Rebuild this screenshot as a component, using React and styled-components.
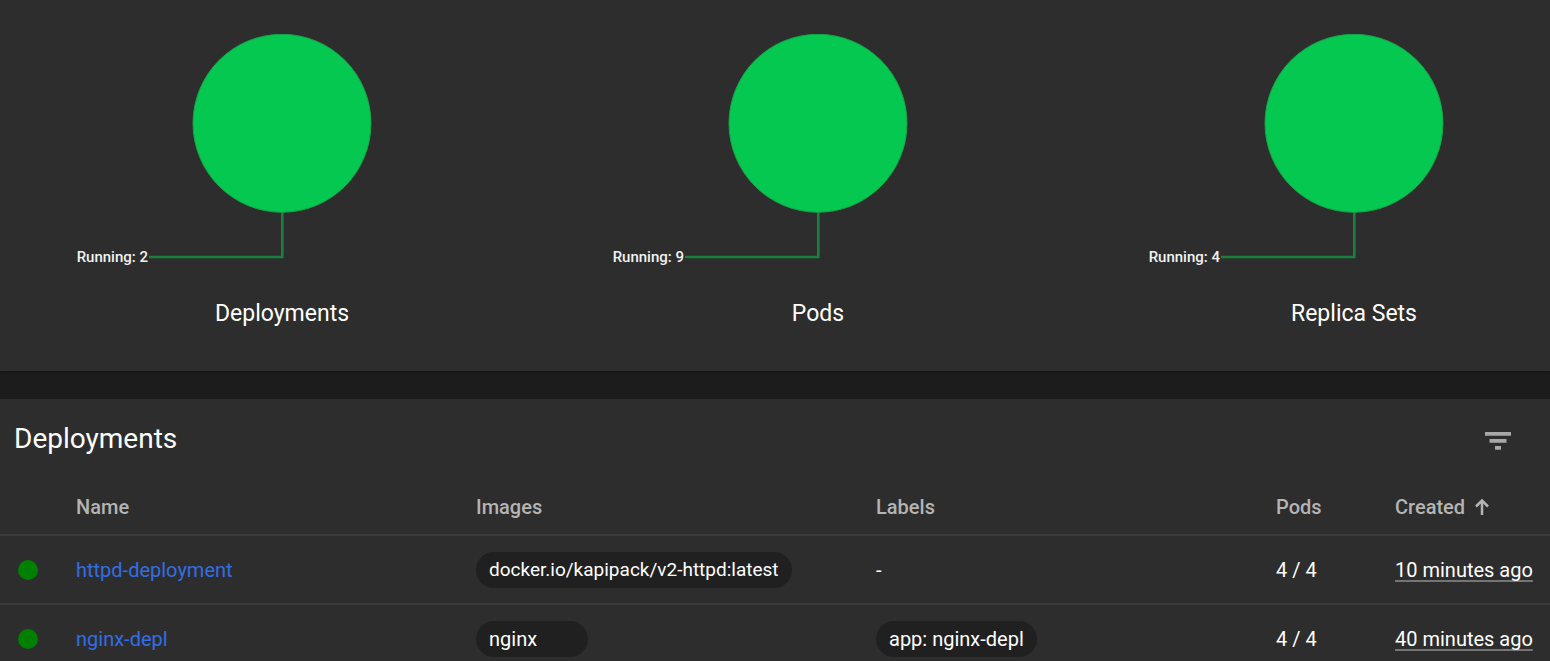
import React from "react";
import styled, { createGlobalStyle } from "styled-components";

const GlobalStyle = createGlobalStyle`
  * { box-sizing: border-box; }
  body {
    margin: 0;
    background: #1c1c1c;
    color: #fff;
    font-family: Roboto, "Liberation Sans", sans-serif;
  }
`;

const Page = styled.main`
  display: flex;
  flex-direction: column;
  gap: 28px;
  max-height: 100vh;
  overflow: hidden;
`;

const Panel = styled.section`
  flex: none;
  background: #2d2d2d;
  box-shadow: 0 2px 2px rgba(0, 0, 0, 0.2);
`;

const ChartRow = styled.div`
  display: grid;
  grid-template-columns: repeat(3, 1fr);
  margin-right: -72px;
  padding: 34px 0 42px 14px;
`;

const ChartCard = styled.figure`
  display: flex;
  flex-direction: column;
  align-items: center;
  gap: 29px;
  margin: 0;
`;

const Pie = styled.svg`
  display: block;
  width: 424px;
  height: 236px;
`;

const PieLabel = styled.text`
  fill: #f2f2f2;
  font-size: 15px;
  font-weight: 500;
  text-anchor: end;
`;

const ChartTitle = styled.figcaption`
  font-size: 23px;
  line-height: 30px;
`;

const PanelHeader = styled.header`
  display: flex;
  align-items: center;
  justify-content: space-between;
  height: 80px;
  padding: 0 36px 0 14px;
`;

const PanelTitle = styled.h2`
  margin: 0;
  font-size: 28px;
  font-weight: 400;
  line-height: 36px;
`;

const FilterButton = styled.button`
  display: flex;
  padding: 0;
  border: 0;
  background: none;
  color: #a8a8a8;
  cursor: pointer;
`;

const Table = styled.table`
  width: 100%;
  table-layout: fixed;
  border-collapse: separate;
  border-spacing: 0;
  font-size: 20px;
  line-height: 28px;
`;

const Col = styled.col`
  width: ${(p) => p.$width || "auto"};
`;

const HeadCell = styled.th`
  height: 57px;
  padding: 0;
  border-bottom: 2px solid #3b3b3b;
  color: #b4b4b4;
  font-weight: 500;
  text-align: left;
  white-space: nowrap;
`;

const Cell = styled.td`
  height: 69px;
  padding: 0;
  border-bottom: 2px solid #3b3b3b;
  white-space: nowrap;
`;

const SortButton = styled.button`
  display: flex;
  align-items: center;
  gap: 8px;
  padding: 0;
  border: 0;
  background: none;
  color: inherit;
  font: inherit;
  cursor: pointer;
`;

const StatusDot = styled.span`
  display: block;
  width: 20px;
  height: 20px;
  margin-left: 18px;
  border-radius: 50%;
  background: #008000;
`;

const NameLink = styled.a`
  color: #326de6;
  text-decoration: none;
`;

const Chip = styled.span`
  display: inline-block;
  min-width: 112px;
  padding: 4px 13px;
  border-radius: 18px;
  background: #202020;
  font-size: ${(p) => (p.$compact ? "19px" : "20px")};
  vertical-align: middle;
`;

const Age = styled.span`
  text-decoration: underline;
  text-decoration-color: #757575;
  text-decoration-thickness: 2px;
  text-decoration-skip-ink: none;
  text-underline-offset: 3px;
`;

const charts = [
  { title: "Deployments", running: 2 },
  { title: "Pods", running: 9 },
  { title: "Replica Sets", running: 4 },
];

const deployments = [
  {
    name: "httpd-deployment",
    image: "docker.io/kapipack/v2-httpd:latest",
    label: null,
    pods: "4 / 4",
    created: "10 minutes ago",
  },
  {
    name: "nginx-depl",
    image: "nginx",
    label: "app: nginx-depl",
    pods: "4 / 4",
    created: "40 minutes ago",
  },
];

function StatusChart({ title, running }) {
  return (
    <ChartCard>
      <Pie viewBox="0 0 424 236" role="img" aria-label={`${title}, running ${running}`}>
        <path d="M212.300 170V223H79" fill="none" stroke="#1b7f3f" strokeWidth="2.600" />
        <circle cx="212" cy="89.300" r="89" fill="#04c850" stroke="#17a349" strokeWidth="1" />
        <PieLabel x="78" y="228">{`Running: ${running}`}</PieLabel>
      </Pie>
      <ChartTitle>{title}</ChartTitle>
    </ChartCard>
  );
}

export default function App() {
  return (
    <>
      <GlobalStyle />
      <Page>
        <Panel>
          <ChartRow>
            {charts.map((c) => (
              <StatusChart key={c.title} {...c} />
            ))}
          </ChartRow>
        </Panel>
        <Panel>
          <PanelHeader>
            <PanelTitle>Deployments</PanelTitle>
            <FilterButton type="button" aria-label="Filter">
              <svg width="32" height="32" viewBox="0 0 32 32" fill="currentColor">
                <path d="M3 9h26v3.700H3zM7.500 16h17v3.700h-17zM13 23h6v3.700h-6z" />
              </svg>
            </FilterButton>
          </PanelHeader>
          <Table>
            <colgroup>
              <Col $width="76px" />
              <Col />
              <Col />
              <Col />
              <Col $width="119px" />
              <Col $width="155px" />
            </colgroup>
            <thead>
              <tr>
                <HeadCell aria-label="Status" />
                <HeadCell>Name</HeadCell>
                <HeadCell>Images</HeadCell>
                <HeadCell>Labels</HeadCell>
                <HeadCell>Pods</HeadCell>
                <HeadCell>
                  <SortButton type="button">
                    Created
                    <svg width="18" height="18" viewBox="0 0 18 18" fill="none" stroke="currentColor" strokeWidth="2.500">
                      <path d="M9 17V3M3 8.500L9 2.500L15 8.500" />
                    </svg>
                  </SortButton>
                </HeadCell>
              </tr>
            </thead>
            <tbody>
              {deployments.map((d) => (
                <tr key={d.name}>
                  <Cell>
                    <StatusDot />
                  </Cell>
                  <Cell>
                    <NameLink href={`#${d.name}`}>{d.name}</NameLink>
                  </Cell>
                  <Cell>
                    <Chip $compact={d.image.length > 24}>{d.image}</Chip>
                  </Cell>
                  <Cell>{d.label ? <Chip>{d.label}</Chip> : "-"}</Cell>
                  <Cell>{d.pods}</Cell>
                  <Cell>
                    <Age>{d.created}</Age>
                  </Cell>
                </tr>
              ))}
            </tbody>
          </Table>
        </Panel>
      </Page>
    </>
  );
}
